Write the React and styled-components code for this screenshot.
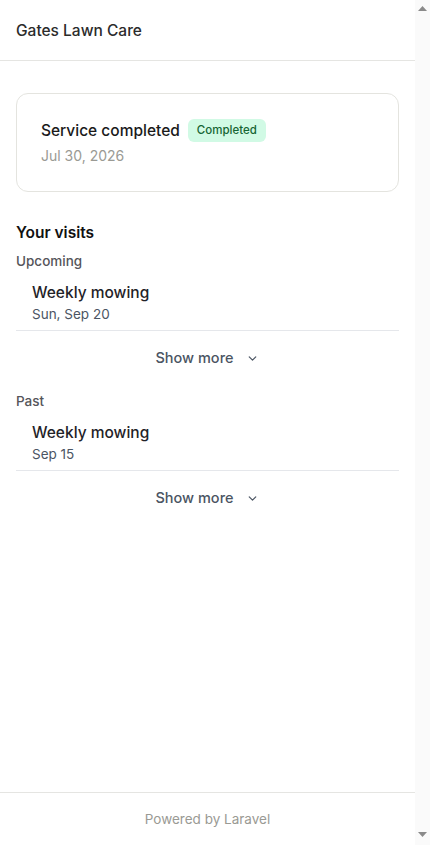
import React from "react";
import styled, { createGlobalStyle } from "styled-components";

const Global = createGlobalStyle`
body {
    margin: 0;
    background: #fff;
    font-family: Inter, "Noto Sans", sans-serif;
    -webkit-font-smoothing: antialiased;
}
* { box-sizing: border-box; }
`;

const Chevron = () => (
    <svg width="13" height="13" viewBox="0 0 24 24" fill="none" stroke="currentColor" strokeWidth="2.2" strokeLinecap="round" strokeLinejoin="round">
        <path d="M6 9l6 6 6-6" />
    </svg>
);

const Arrow = ({down}) => (
    <svg width="9" height="5" viewBox="0 0 9 5">
        <path d={down ? "M0 0h9L4.5 5z" : "M0 5h9L4.5 0z"} fill="#8a8a8a" />
    </svg>
);

const VisitGroup = ({label, title, date}) => {
    return (
        <Group>
            <GroupLabel>{label}</GroupLabel>
            <Visit>
                <VisitTitle>{title}</VisitTitle>
                <VisitDate>{date}</VisitDate>
            </Visit>
            <ShowMore>
                Show more <Chevron />
            </ShowMore>
        </Group>
    )
}

const App = () => {
    return (
        <Shell>
            <Global />
            <Page>
                <Header>Gates Lawn Care</Header>
                <Main>
                    <Card>
                        <TitleRow>
                            <CardTitle>Service completed</CardTitle>
                            <Badge>Completed</Badge>
                        </TitleRow>
                        <CardDate>Jul 30, 2026</CardDate>
                    </Card>
                    <Section>
                        <SectionTitle>Your visits</SectionTitle>
                        <VisitGroup label="Upcoming" title="Weekly mowing" date="Sun, Sep 20" />
                        <VisitGroup label="Past" title="Weekly mowing" date="Sep 15" />
                    </Section>
                </Main>
                <Footer>Powered by Laravel</Footer>
            </Page>
            <Rail>
                <Arrow />
                <Arrow down />
            </Rail>
        </Shell>
    )
}

export default App;

const Shell = styled.div`
display: flex;
min-height: 100vh;
`;

const Page = styled.div`
flex: 1;
min-width: 0;
display: flex;
flex-direction: column;
`;

const Rail = styled.div`
width: 15px;
flex-shrink: 0;
background: #fafafa;
display: flex;
flex-direction: column;
justify-content: space-between;
align-items: center;
padding: 6px 0 8px;
`;

const Header = styled.header`
height: 61px;
padding: 0 16px;
display: flex;
align-items: center;
border-bottom: 1px solid #e5e5e2;
font-size: 15.5px;
font-weight: 450;
color: #2b2b2b;
`;

const Main = styled.main`
flex: 1;
padding: 32px 16px;
`;

const Card = styled.div`
border: 1px solid #e4e4df;
border-radius: 12px;
padding: 24px 24px 27px;
`;

const TitleRow = styled.div`
display: flex;
align-items: center;
gap: 8px;
height: 24px;
`;

const CardTitle = styled.div`
font-size: 15.5px;
font-weight: 500;
color: #1a1a1a;
`;

const Badge = styled.span`
background: #d1fae5;
color: #166534;
font-size: 11.5px;
font-weight: 500;
padding: 0 9px;
height: 23px;
line-height: 23px;
border-radius: 6px;
`;

const CardDate = styled.div`
margin-top: 5px;
font-size: 14px;
color: #9a9a94;
`;

const Section = styled.section`
margin-top: 31px;
`;

const SectionTitle = styled.h2`
margin: 0;
font-size: 15.5px;
font-weight: 600;
color: #111;
`;

const Group = styled.div`
margin-top: 9px;
& + & {
    margin-top: 8px;
}
`;

const GroupLabel = styled.div`
font-size: 13.5px;
font-weight: 500;
color: #55555a;
line-height: 20px;
`;

const Visit = styled.div`
padding: 11px 16px 6px;
border-bottom: 1px solid #e5e7eb;
`;

const VisitTitle = styled.div`
font-size: 15.5px;
font-weight: 500;
color: #1f2328;
line-height: 22px;
`;

const VisitDate = styled.div`
font-size: 13.5px;
color: #4b5563;
line-height: 20px;
`;

const ShowMore = styled.button`
width: 100%;
height: 52px;
border: 0;
background: none;
display: flex;
align-items: center;
justify-content: center;
gap: 13px;
font-family: inherit;
font-size: 14.5px;
font-weight: 500;
color: #4b5563;
padding: 0;
svg { margin-top: 2px; }
`;

const Footer = styled.footer`
height: 53px;
border-top: 1px solid #e5e5e2;
display: flex;
align-items: center;
justify-content: center;
font-size: 13.5px;
color: #9a9a94;
`;
